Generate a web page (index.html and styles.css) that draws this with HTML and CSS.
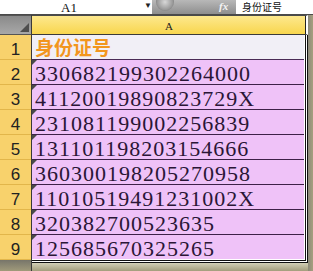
FILE: index.html
```html
<!DOCTYPE html>
<html lang="zh">
<head>
<meta charset="utf-8">
<title>身份证号</title>
<link rel="stylesheet" href="styles.css">
</head>
<body>
<div class="formula-bar">
  <div class="namebox">
    <span class="cellref">A1</span>
    <span class="drop">&#9660;</span>
  </div>
  <div class="fxzone">
    <span class="knob"></span>
    <span class="fx">fx</span>
  </div>
  <div class="formula-input">身份证号</div>
</div>
<div class="divider"></div>
<div class="sheet">
  <div class="heads">
    <div class="corner"><span class="corner-tri"></span></div>
    <div class="rowno">1</div>
    <div class="rowno">2</div>
    <div class="rowno">3</div>
    <div class="rowno">4</div>
    <div class="rowno">5</div>
    <div class="rowno">6</div>
    <div class="rowno">7</div>
    <div class="rowno">8</div>
    <div class="rowno">9</div>
    <div class="heads-foot"></div>
  </div>
  <div class="col">
    <div class="colhead">A</div>
    <div class="cells">
      <div class="cell title">身份证号</div>
      <div class="cell num">330682199302264000</div>
      <div class="cell num">41120019890823729X</div>
      <div class="cell num">231081199002256839</div>
      <div class="cell num">131101198203154666</div>
      <div class="cell num">360300198205270958</div>
      <div class="cell num">11010519491231002X</div>
      <div class="cell num">320382700523635</div>
      <div class="cell num">125685670325265</div>
    </div>
    <div class="col-foot"></div>
  </div>
  <div class="edge"></div>
</div>
</body>
</html>
```

FILE: styles.css
```css
body {
  margin: 0;
  width: 313px;
  height: 271px;
  overflow: hidden;
  background: #9c9676;
  font-family: "Liberation Serif", "Noto Sans CJK SC", serif;
}

/* formula bar */
.formula-bar {
  display: flex;
  height: 14px;
  background: #fff;
  overflow: hidden;
}

.namebox {
  width: 152px;
  display: flex;
  align-items: center;
  position: relative;
}

.cellref {
  margin-left: 61px;
  font-size: 13px;
  line-height: 13px;
  color: #111;
}

.drop {
  position: absolute;
  left: 144px;
  top: 1px;
  font-size: 8px;
  color: #222;
}

.fxzone {
  width: 84px;
  background: linear-gradient(#b8b8b8, #8e8e8e);
  position: relative;
}

.knob {
  position: absolute;
  left: 4px;
  top: -7px;
  width: 18px;
  height: 18px;
  border-radius: 50%;
  background: radial-gradient(#d8d8d8, #9a9a9a 60%, #555);
}

.fx {
  position: absolute;
  left: 67px;
  top: 0;
  font-size: 11px;
  line-height: 12px;
  font-style: italic;
  font-weight: bold;
  color: #f4f4f4;
}

.formula-input {
  flex: 1;
  display: flex;
  align-items: center;
  padding-left: 6px;
  font-family: "Noto Sans CJK SC", sans-serif;
  font-size: 10px;
  line-height: 14px;
  color: #111;
}

.divider {
  height: 1px;
  background: #4a4a4a;
}

/* grid */
.sheet {
  display: flex;
  height: 256px;
}

.heads {
  width: 31px;
  display: flex;
  flex-direction: column;
  border-right: 1px solid #3a3a3a;
}

.corner {
  height: 19px;
  background: linear-gradient(#8a8a8a, #a8a8a8);
  border-top: 1px solid #555;
  border-bottom: 1px solid #555;
  box-sizing: border-box;
  height: 20px;
  position: relative;
}

.corner-tri {
  position: absolute;
  right: 2px;
  bottom: 2px;
  width: 0;
  height: 0;
  border-left: 9px solid transparent;
  border-bottom: 9px solid #4e4e4e;
}

.rowno {
  height: 24px;
  background: #f8d26c;
  border-bottom: 1px solid #e2b64a;
  font-family: "Liberation Sans", sans-serif;
  font-size: 17px;
  line-height: 30px;
  text-align: center;
  color: #222;
}

.heads-foot {
  flex: 1;
  background: linear-gradient(#77756a, #a09a7a);
}

.col {
  width: 276px;
  display: flex;
  flex-direction: column;
}

.colhead {
  height: 18px;
  border-top: 1px solid #4a4a4a;
  background: linear-gradient(#fde88e, #f8d64e);
  border-bottom: 1px solid #3a3a3a;
  font-size: 11px;
  line-height: 21px;
  text-align: center;
  color: #222;
  border-right: 2px solid #fff;
  box-shadow: inset -1px 0 0 #222;
}

.cells {
  border-right: 3px double #111;
  border-bottom: 3px double #111;
  background: #fff;
  padding: 0 1px 1px 0;
}

.cell {
  height: 24px;
  border-bottom: 1px solid #3d2148;
  padding-left: 3px;
  position: relative;
  white-space: nowrap;
}

.cell:last-child {
  border-bottom: none;
}

.title {
  background: #f1eff6;
  font-family: "Noto Sans CJK SC", sans-serif;
  font-weight: bold;
  font-size: 19px;
  line-height: 24px;
  color: #f2961e;
  border-bottom-color: #4a2a55;
}

.num {
  background: #efc2f8;
  font-size: 22px;
  letter-spacing: 1px;
  line-height: 27px;
  color: #2a1636;
}

.num::before {
  content: "";
  position: absolute;
  left: 0;
  top: 0;
  border-top: 5px solid #4a4a4a;
  border-right: 5px solid transparent;
}

.col-foot {
  flex: 1;
  background: linear-gradient(#d2cfb6, #a39d7c);
}

.edge {
  flex: 1;
  background: linear-gradient(90deg, #8c8a7a, #a6a07e);
}
```
